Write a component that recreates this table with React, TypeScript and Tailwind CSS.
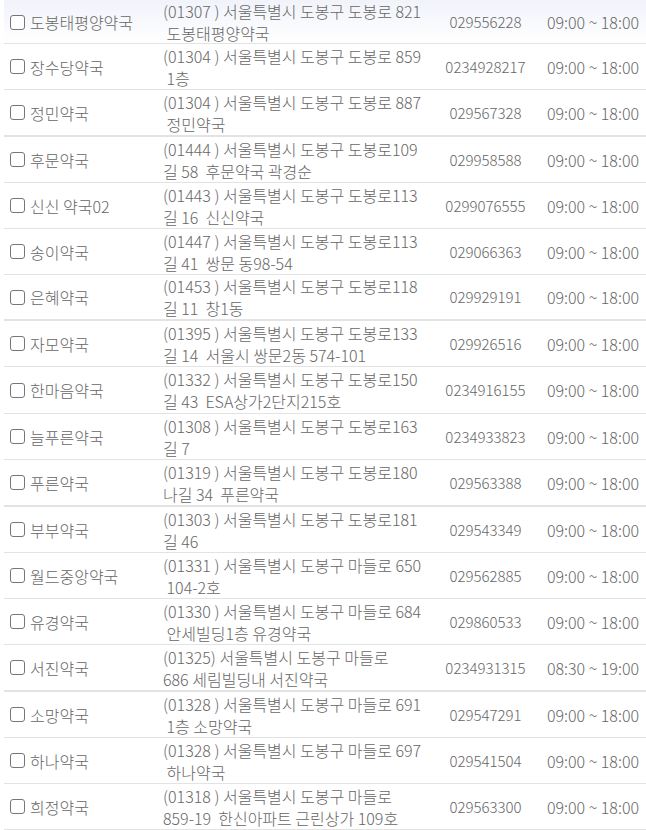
import React from "react";

type Pharmacy = {
    name: string;
    addr1: string;
    addr2: string;
    tel: string;
    hours: string;
    tall?: boolean;
    thick?: boolean;
};

const rows: Pharmacy[] = [
    { name: "도봉태평양약국", addr1: "(01307 ) 서울특별시 도봉구 도봉로 821", addr2: " 도봉태평양약국", tel: "029556228", hours: "09:00 ~ 18:00" },
    { name: "장수당약국", addr1: "(01304 ) 서울특별시 도봉구 도봉로 859", addr2: " 1층", tel: "0234928217", hours: "09:00 ~ 18:00" },
    { name: "정민약국", addr1: "(01304 ) 서울특별시 도봉구 도봉로 887", addr2: " 정민약국", tel: "029567328", hours: "09:00 ~ 18:00", tall: true, thick: true },
    { name: "후문약국", addr1: "(01444 ) 서울특별시 도봉구 도봉로109", addr2: "길 58  후문약국 곽경순", tel: "029958588", hours: "09:00 ~ 18:00" },
    { name: "신신 약국02", addr1: "(01443 ) 서울특별시 도봉구 도봉로113", addr2: "길 16  신신약국", tel: "0299076555", hours: "09:00 ~ 18:00" },
    { name: "송이약국", addr1: "(01447 ) 서울특별시 도봉구 도봉로113", addr2: "길 41  쌍문 동98-54", tel: "029066363", hours: "09:00 ~ 18:00" },
    { name: "은혜약국", addr1: "(01453 ) 서울특별시 도봉구 도봉로118", addr2: "길 11  창1동", tel: "029929191", hours: "09:00 ~ 18:00", thick: true },
    { name: "자모약국", addr1: "(01395 ) 서울특별시 도봉구 도봉로133", addr2: "길 14  서울시 쌍문2동 574-101", tel: "029926516", hours: "09:00 ~ 18:00" },
    { name: "한마음약국", addr1: "(01332 ) 서울특별시 도봉구 도봉로150", addr2: "길 43  ESA상가2단지215호", tel: "0234916155", hours: "09:00 ~ 18:00", tall: true },
    { name: "늘푸른약국", addr1: "(01308 ) 서울특별시 도봉구 도봉로163", addr2: "길 7", tel: "0234933823", hours: "09:00 ~ 18:00" },
    { name: "푸른약국", addr1: "(01319 ) 서울특별시 도봉구 도봉로180", addr2: "나길 34  푸른약국", tel: "029563388", hours: "09:00 ~ 18:00", tall: true, thick: true },
    { name: "부부약국", addr1: "(01303 ) 서울특별시 도봉구 도봉로181", addr2: "길 46", tel: "029543349", hours: "09:00 ~ 18:00" },
    { name: "월드중앙약국", addr1: "(01331 ) 서울특별시 도봉구 마들로 650", addr2: " 104-2호", tel: "029562885", hours: "09:00 ~ 18:00" },
    { name: "유경약국", addr1: "(01330 ) 서울특별시 도봉구 마들로 684", addr2: " 안세빌딩1층 유경약국", tel: "029860533", hours: "09:00 ~ 18:00" },
    { name: "서진약국", addr1: "(01325) 서울특별시 도봉구 마들로", addr2: "686 세림빌딩내 서진약국", tel: "0234931315", hours: "08:30 ~ 19:00", tall: true, thick: true },
    { name: "소망약국", addr1: "(01328 ) 서울특별시 도봉구 마들로 691", addr2: " 1층 소망약국", tel: "029547291", hours: "09:00 ~ 18:00" },
    { name: "하나약국", addr1: "(01328 ) 서울특별시 도봉구 마들로 697", addr2: " 하나약국", tel: "029541504", hours: "09:00 ~ 18:00" },
    { name: "희정약국", addr1: "(01318 ) 서울특별시 도봉구 마들로", addr2: "859-19  한신아파트 근린상가 109호", tel: "029563300", hours: "09:00 ~ 18:00" },
];

function Row({ p, first }: { p: Pharmacy; first: boolean }) {
    const height = first ? "h-[44px]" : p.tall ? "h-[47px]" : "h-[46px]";
    return (
        <div
            className={`grid grid-cols-[154px_278px_99px_111px] items-center border-[#e3e3e3] ${height} ${p.thick ? "border-b-2" : "border-b"} ${first ? "bg-gradient-to-b from-[#f1f3fa] to-white" : "bg-white"}`}
        >
            <label className="flex items-center pl-[6px] gap-[5px]">
                <span className="w-[15px] h-[15px] rounded-[3px] border border-[#767676] bg-white shrink-0" />
                <span className="whitespace-nowrap">{p.name}</span>
            </label>
            <div className="pl-[5px] whitespace-pre">
                <div>{p.addr1}</div>
                <div>{p.addr2}</div>
            </div>
            <div className="text-center text-[15px]">{p.tel}</div>
            <div className="text-center pl-[5px] whitespace-nowrap">{p.hours}</div>
        </div>
    );
}

export default function App() {
    return (
        <div className="w-[646px] h-[830px] overflow-hidden bg-white">
            <div
                className="ml-[4px] text-[16px] leading-[22px] font-light text-[#666666]"
                style={{ fontFamily: '"Noto Sans CJK KR", "Noto Sans", sans-serif' }}
            >
                {rows.map((p, i) => (
                    <Row key={p.name} p={p} first={i === 0} />
                ))}
            </div>
        </div>
    );
}
